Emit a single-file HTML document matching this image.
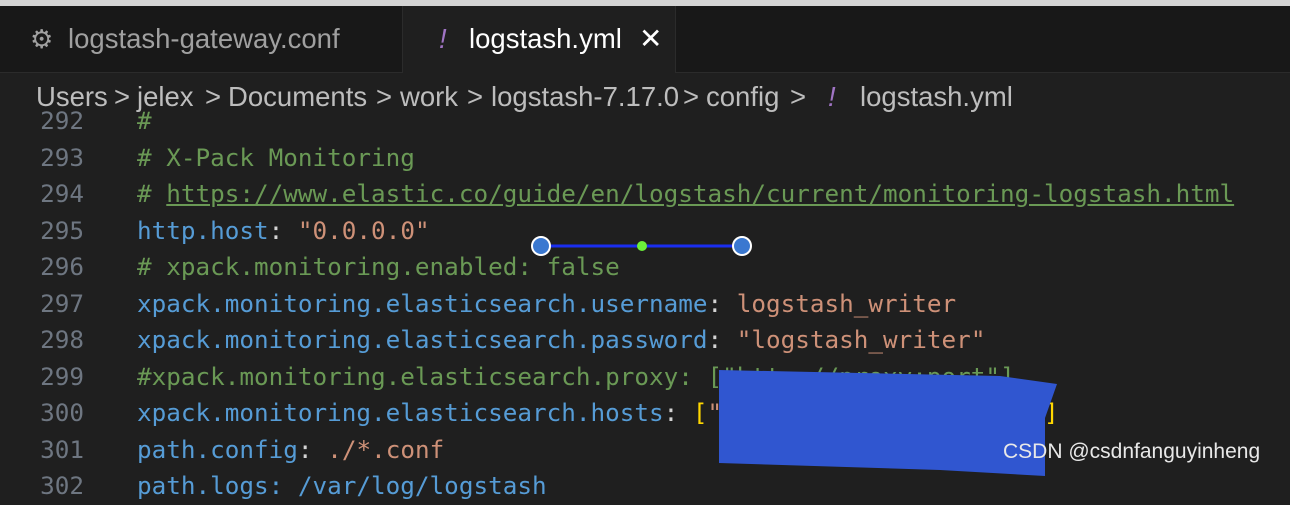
<!DOCTYPE html>
<html><head><meta charset="utf-8"><style>
body{margin:0;width:1290px;height:476px;overflow:hidden;background:#1f1f1f;position:relative;font-family:"Liberation Sans",sans-serif}
.top{position:absolute;left:0;top:0;width:1290px;height:6px;background:#d4d4d4}
.tabs{position:absolute;left:0;top:6px;width:1290px;height:66px;background:#181818;border-bottom:1px solid #2b2b2b}
.tab{position:absolute;top:0;height:66px;line-height:66px;font-size:27.5px}
.t1{left:2px;width:400px;color:#a0a0a0;background:#181818;border-right:1px solid #2b2b2b}
.t2{left:403px;width:272px;color:#fff;background:#1f1f1f;border-right:1px solid #2b2b2b;height:67px}
.crumb{position:absolute;left:0;top:78px;width:1290px;height:38px;font-size:27.5px;color:#bdbdbd;line-height:38px;white-space:pre}
.crumb span{position:absolute;top:0}
.code{position:absolute;left:0;top:103px;font-family:"DejaVu Sans Mono","Liberation Mono",monospace;font-size:24.3px}
.code div{height:36.5px;line-height:36.5px;white-space:pre}
.ln{display:inline-block;width:84px;text-align:right;color:#6e7681;margin-right:53px}
.c{color:#6a9955}.k{color:#569cd6}.s{color:#ce9178}.p{color:#d4d4d4}.y{color:#ffd700}
.u{text-decoration:underline}
.wm{position:absolute;left:1003px;top:440px;font-size:21px;color:#e8e8e8}
</style></head><body>
<div class="top"></div>
<div class="tabs">
<div class="tab t1"><span style="position:absolute;left:28px;color:#a0a0a0;font-size:26px">⚙</span><span style="position:absolute;left:66px">logstash-gateway.conf</span></div>
<div class="tab t2"><span style="position:absolute;left:36px;color:#a074c4;font-style:italic">!</span><span style="position:absolute;left:66px">logstash.yml</span><span style="position:absolute;left:236px;font-size:28px">✕</span></div>
</div>
<div class="crumb"><span style="left:36px">Users</span><span style="left:114px">&gt;</span><span style="left:137px">jelex</span><span style="left:205px">&gt;</span><span style="left:228px">Documents</span><span style="left:376px">&gt;</span><span style="left:400px">work</span><span style="left:467px">&gt;</span><span style="left:491px">logstash-7.17.0</span><span style="left:683px">&gt;</span><span style="left:706px">config</span><span style="left:790px">&gt;</span><span style="left:828px;color:#a074c4;font-style:italic">!</span><span style="left:860px">logstash.yml</span></div>
<div class="code"><div><span class="ln">292</span><span class="c">#</span></div><div><span class="ln">293</span><span class="c"># X-Pack Monitoring</span></div><div><span class="ln">294</span><span class="c"># <span class="u">https://www.elastic.co/guide/en/logstash/current/monitoring-logstash.html</span></span></div><div><span class="ln">295</span><span class="k">http.host</span><span class="p">: </span><span class="s">"0.0.0.0"</span></div><div><span class="ln">296</span><span class="c"># xpack.monitoring.enabled: false</span></div><div><span class="ln">297</span><span class="k">xpack.monitoring.elasticsearch.username</span><span class="p">: </span><span class="s">logstash_writer</span></div><div><span class="ln">298</span><span class="k">xpack.monitoring.elasticsearch.password</span><span class="p">: </span><span class="s">"logstash_writer"</span></div><div><span class="ln">299</span><span class="c">#xpack.monitoring.elasticsearch.proxy: ["http://proxy:port"]</span></div><div><span class="ln">300</span><span class="k">xpack.monitoring.elasticsearch.hosts</span><span class="p">: </span><span class="y">[</span><span class="s">"xxxxxxxxxxxxxxxxxxxxx"</span><span class="y">]</span></div><div><span class="ln">301</span><span class="k">path.config</span><span class="p">: </span><span class="s">./*.conf</span></div><div><span class="ln">302</span><span class="k">path.logs: /var/log/logstash</span></div></div>
<svg style="position:absolute;left:0;top:0" width="1290" height="476">
<polygon points="719,370 1000,376 1057,384 1045,418 1045,476 940,470 719,463" fill="#3056d0"/>
<line x1="541" y1="246" x2="742" y2="246" stroke="#1a2ef0" stroke-width="3"/>
<circle cx="541" cy="246" r="9" fill="#3a78d0" stroke="#fff" stroke-width="2"/>
<circle cx="742" cy="246" r="9" fill="#3a78d0" stroke="#fff" stroke-width="2"/>
<circle cx="642" cy="246" r="5" fill="#6cf03a"/>
</svg>
<div class="wm">CSDN @csdnfanguyinheng</div>
</body></html>
